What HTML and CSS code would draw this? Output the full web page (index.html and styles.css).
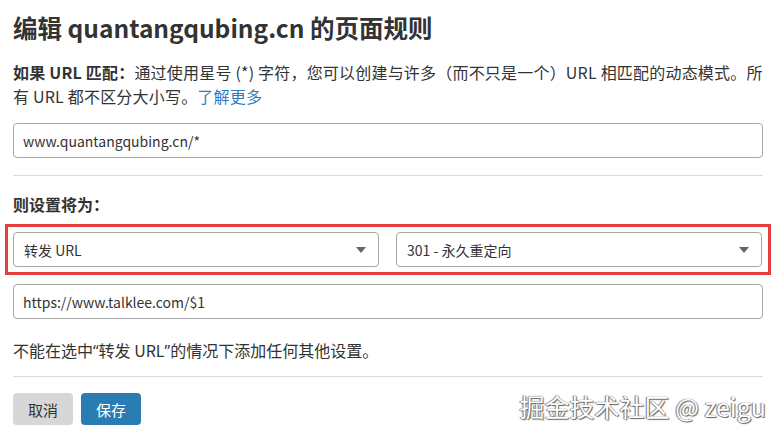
FILE: index.html
```html
<!DOCTYPE html>
<html lang="zh-CN">
<head>
<meta charset="utf-8">
<title>编辑页面规则</title>
<link rel="stylesheet" href="styles.css">
</head>
<body>
<div class="page">
  <h1 class="title">编辑 quantangqubing.cn 的页面规则</h1>
  <p class="desc"><strong>如果 URL 匹配：</strong>通过使用星号 (*) 字符，您可以创建与许多（而不只是一个）URL 相匹配的动态模式。所有 URL 都不区分大小写。<a class="link" href="#">了解更多</a></p>
  <div class="field">www.quantangqubing.cn/*</div>
  <div class="rule"></div>
  <div class="label">则设置将为：</div>
  <div class="highlight">
    <div class="select"><span>转发 URL</span><svg class="caret" width="10" height="6" viewBox="0 0 10 6"><path d="M0 0H10L5 6Z" fill="#666"/></svg></div>
    <div class="select"><span>301 - 永久重定向</span><svg class="caret" width="10" height="6" viewBox="0 0 10 6"><path d="M0 0H10L5 6Z" fill="#666"/></svg></div>
  </div>
  <div class="field field-dest">https://www.talklee.com/$1</div>
  <p class="note">不能在选中<span class="q">“</span>转发 URL<span class="q">”</span>的情况下添加任何其他设置。</p>
  <div class="rule rule-bottom"></div>
  <div class="actions">
    <button class="btn btn-cancel">取消</button>
    <button class="btn btn-save">保存</button>
  </div>
  <div class="watermark">掘金技术社区 @ zeigu</div>
</div>
</body>
</html>
```
FILE: styles.css
```css
* { box-sizing: border-box; }
html, body { margin: 0; padding: 0; background: #fff; }
body {
  font-family: "Noto Sans CJK SC", "Open Sans", sans-serif;
  color: #333;
  width: 784px;
  height: 437px;
  overflow: hidden;
}
.page {
  position: relative;
  padding: 12px 21px 0 13px;
  height: 437px;
}
.title {
  margin: 0;
  font-size: 24.5px;
  line-height: 32px;
  font-weight: 700;
  color: #333;
}
.desc {
  margin: 16px 0 0;
  font-size: 16px;
  line-height: 24px;
  letter-spacing: 0.2px;
}
.desc strong { font-weight: 700; }
.link { color: #2f7bbf; text-decoration: none; }
.field {
  margin-top: 15px;
  height: 35px;
  border: 1px solid #a6a6a6;
  border-radius: 4px;
  padding: 0 9px;
  display: flex;
  align-items: center;
  font-size: 14px;
  color: #333;
}
.rule {
  margin-top: 17px;
  height: 1px;
  background: #dcdcdc;
}
.label {
  margin-top: 16px;
  font-size: 16px;
  font-weight: 700;
  line-height: 24px;
}
.highlight {
  margin: 8px -8px 0 -8px;
  border: 3px solid #e53e3e;
  padding: 5px 6px 5px 5px;
  display: flex;
  gap: 17px;
}
.select {
  flex: 1;
  height: 35px;
  border: 1px solid #a6a6a6;
  border-radius: 4px;
  padding: 0 12px 0 10px;
  display: flex;
  align-items: center;
  justify-content: space-between;
  font-size: 14px;
}
.caret { display: block; }
.field-dest { margin-top: 9px; }
.note {
  margin: 19px 0 0;
  font-size: 16px;
  line-height: 24px;
}
.q { font-family: "Open Sans", sans-serif; }
.rule-bottom { margin-top: 13px; }
.actions {
  margin-top: 16px;
  display: flex;
  gap: 8px;
}
.btn {
  width: 60px;
  height: 32px;
  border: none;
  border-radius: 4px;
  font-family: "Noto Sans CJK SC", "Open Sans", sans-serif;
  font-size: 15px;
  padding: 0;
}
.btn-cancel { background: #d5d7d8; color: #333; }
.btn-save { background: #2c7cb4; color: #fff; }
.watermark {
  position: absolute;
  right: 18px;
  bottom: 16px;
  font-family: "Noto Sans CJK SC", "Open Sans", sans-serif;
  font-size: 25px;
  line-height: 30px;
  color: #fff;
  text-shadow: 0 0 1px #555, 1px 1px 1px #666, -1px 0 1px #888;
}
```
